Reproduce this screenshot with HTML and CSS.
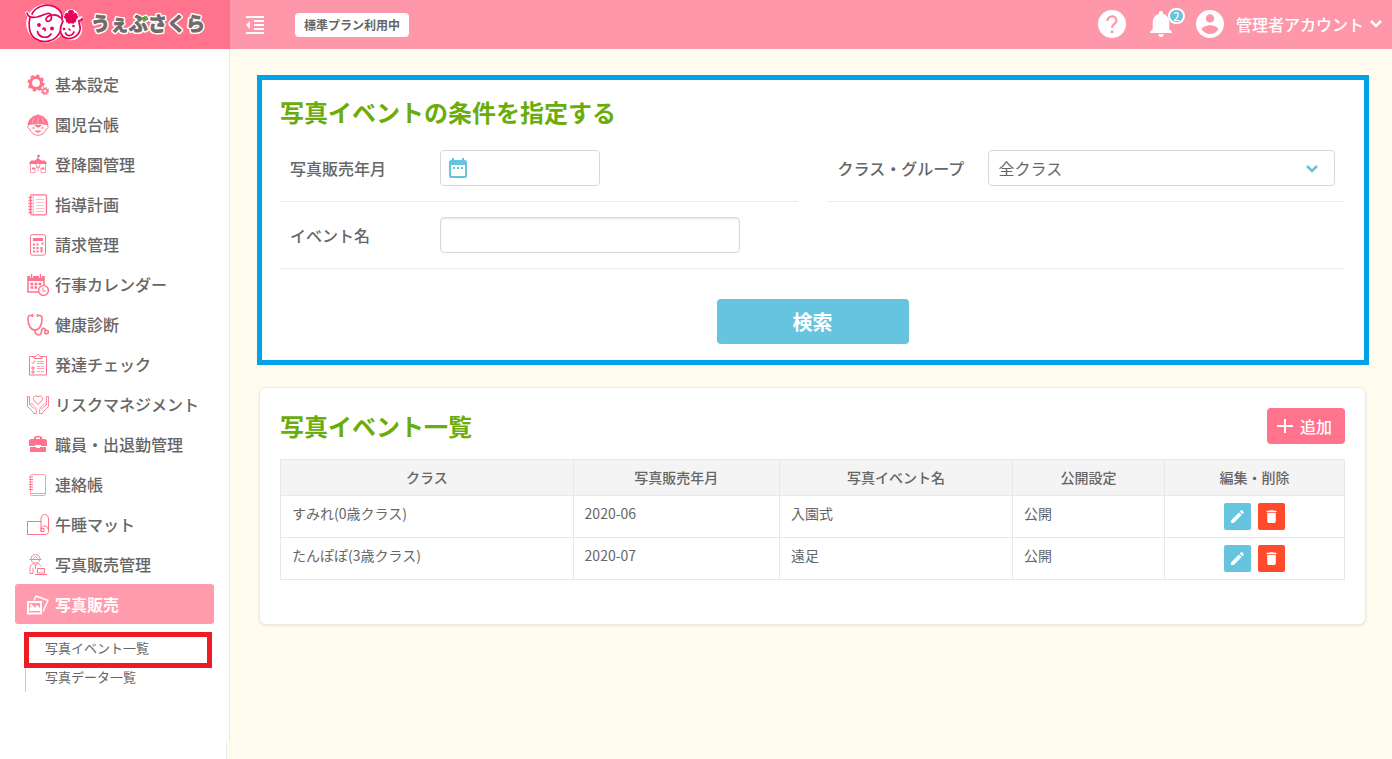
FILE: index.html
```html
<!DOCTYPE html>
<html lang="ja">
<head>
<meta charset="utf-8">
<meta name="viewport" content="width=device-width, initial-scale=1">
<title>写真イベント一覧 | うぇぶさくら</title>
<link rel="stylesheet" href="styles.css">
</head>
<body>
<header class="header">
  <a class="logo" href="#" aria-label="うぇぶさくら">
    <svg width="182" height="44" viewBox="0 0 182 44">
      <g fill="#fff" stroke="#fff" stroke-width="3.500" stroke-linejoin="round" stroke-linecap="round">
        <circle cx="20.500" cy="20.500" r="17.500"/>
        <circle cx="46" cy="26" r="9.500"/>
        <path d="M2 10c2 4 6 5 10 4M54 17l2-2"/>
        <circle cx="46" cy="14" r="6"/>
      </g>
      <g fill="none" stroke="#e5005a" stroke-width="1.700" stroke-linecap="round">
        <path d="M5 14C3 22 4 31 10 35.500c9 6 21 3 25.500-7.500M7 11C11 3 22 0 30 4c6 3 8 7 7 13"/>
        <path d="M2 10c1 4 5 5 10 4 8-2 12-6 14-2 2 6-4 8-5 5-1-4 9-8 15-2"/>
        <path d="M38 18c-3 6-4 12 0 15.500 6 4.500 15 1 17-6.500 1-5-2-7-1-9.500 2 0 3-1 3-2"/>
        <path d="M12.500 28.500c1 6 10 8 13.500 2.500M40.500 30c1.500 4 7 3 8.500-1M18 26c1-2 3 0 2 1.500M44 26l1 1"/>
      </g>
      <g fill="#e5005a">
        <circle cx="14" cy="22" r="1.900"/><circle cx="27" cy="25.500" r="1.900"/>
        <circle cx="39" cy="26" r="1.300"/><circle cx="48.500" cy="23" r="1.300"/>
        <path d="M46 14l-2.500-5 1.500-1.500 1 .8 1-.8 1.500 1.500zM46 14l4-3.800 1.800 1.200-.2 1.400 1 1-1.200 1.700zM46 14l4.800 2.800-.6 2-1.300.1-.6 1.200-2 -.4zM46 14l-.3 5.700-2 .4-.6-1.200-1.300-.1-.6-2zM46 14l-5.400 1.500-1.200-1.700 1-1-.2-1.400 1.800-1.200z" stroke="#e5005a" stroke-width="1.200" stroke-linejoin="round"/>
      </g>
      <g class="logo-text">
        <text class="logo-text-halo" x="66" y="28">うぇぶさくら</text>
        <text class="logo-text-face" x="66" y="28">うぇぶさくら</text>
      </g>
      <path d="M117 15l2 3M120 14l1 2" stroke="#6cb92d" stroke-width="2" stroke-linecap="round"/>
    </svg>
  </a>
  <button class="icon-button toggle" type="button" aria-label="メニューを閉じる">
    <svg width="18" height="18" viewBox="0 0 18 18" fill="#fff"><path d="M0 0h18v2H0zM8 4h10v2H8zM8 8h10v2H8zM8 12h10v2H8zM0 16h18v2H0zM4 5v8L0 9z"/></svg>
  </button>
  <span class="plan">標準プラン利用中</span>
  <div class="header-tools">
    <button class="icon-button" type="button" aria-label="ヘルプ">
      <svg width="28" height="28" viewBox="0 0 28 28"><circle cx="14" cy="14" r="14" fill="#fff"/><path d="M9.500 11c0-6 9-6 9-.5 0 3.500-4.500 3.500-4.500 7.500" fill="none" stroke="#ff97aa" stroke-width="2.200"/><path d="M12.700 20.500h2.600v2.600h-2.600z" fill="#ff97aa"/></svg>
    </button>
    <button class="icon-button bell" type="button" aria-label="お知らせ">
      <svg width="22" height="26" viewBox="4 2.500 16 19.500" preserveAspectRatio="none" fill="#fff"><path d="M12 22c1.100 0 2-.9 2-2h-4c0 1.100.89 2 2 2zm6-6v-5c0-3.070-1.640-5.640-4.500-6.320V4c0-.83-.67-1.500-1.500-1.500s-1.500.67-1.500 1.500v.68C7.630 5.360 6 7.920 6 11v5l-2 2v1h16v-1l-2-2z"/></svg>
      <span class="bell-count">2</span>
    </button>
    <button class="account" type="button">
      <svg width="28" height="28" viewBox="2 2 20 20" fill="#fff"><path d="M12 2C6.480 2 2 6.480 2 12s4.480 10 10 10 10-4.480 10-10S17.520 2 12 2zm0 3c1.660 0 3 1.340 3 3s-1.340 3-3 3-3-1.340-3-3 1.340-3 3-3zm0 14.200c-2.500 0-4.710-1.280-6-3.220.03-1.990 4-3.080 6-3.080 1.990 0 5.970 1.090 6 3.080-1.290 1.940-3.500 3.220-6 3.220z"/></svg>
      <span class="account-name">管理者アカウント</span>
      <svg width="12" height="8" viewBox="0 0 12 8" fill="none" stroke="#fff" stroke-width="2.600"><path d="M1 1l5 5 5-5"/></svg>
    </button>
  </div>
</header>

<div class="layout">
  <aside class="sidebar">
    <nav class="nav">
      <a class="nav-item" href="#">
        <svg class="nav-icon" viewBox="0 0 22 22" fill="none" stroke="#ff738c"><circle cx="9" cy="9" r="5.500" stroke-width="3.200"/><circle cx="9" cy="9" r="7.500" stroke-width="2" stroke-dasharray="3.300 2.590"/><circle cx="18" cy="17" r="2.300" stroke-width="1.600"/><circle cx="18" cy="17" r="3.500" stroke-width="1.300" stroke-dasharray="1.500 1.250"/></svg>
        基本設定</a>
      <a class="nav-item" href="#">
        <svg class="nav-icon" viewBox="0 0 22 22" fill="none" stroke="#ff738c"><path d="M1 10.500C2 5 6 1.500 11 1.500s9 3.500 10 9c-6-1-14-1-20 0z" fill="#ff738c"/><path d="M11 2.500V9M7 4L5 9M15 4l2 5" stroke="#ffc3cd" stroke-width=".8"/><path d="M11 0v2M2 11c-2 1-1 4 1 4 1 4 4 6.200 8 6.200s7-2.200 8-6.200c2 0 3-3 1-4"/><path d="M8.500 17c1.500 1.500 3.500 1.500 5 0z" fill="#ff738c"/><path d="M7 11h8l-3 2.500h-2z" fill="#ff738c" stroke="none"/><path d="M5.500 14h2M14.500 14h2" stroke-width="1.500"/></svg>
        園児台帳</a>
      <a class="nav-item" href="#">
        <svg class="nav-icon" viewBox="0 0 22 22" fill="none" stroke="#ff738c"><path d="M11 6V1" /><path d="M11 1l2 1-2 1zM2.500 9.500L4 7h4l3-2.500L14 7h4l1.500 2.500z" fill="#ff738c"/><path d="M3.500 10v8.500H8v-3c.5-3 5.500-3 6 0v3h4.500V10M11 14v3" opacity=".7"/><circle cx="11" cy="11" r="2" fill="#fff" opacity=".8"/><path d="M5 13.500h3v2H5zM14.500 13.500h3v2h-3z" fill="#ff738c" stroke="none"/></svg>
        登降園管理</a>
      <a class="nav-item" href="#">
        <svg class="nav-icon" viewBox="0 0 22 22" fill="none" stroke="#ff738c"><rect x="3.500" y=".8" width="16" height="20" rx="1.500" stroke-width="1.300"/><path d="M6.500 1v20" opacity=".4"/><path d="M1.500 3.500h4M1.500 6.500h4M1.500 9.500h4M1.500 12.500h4M1.500 15.500h4M1.500 18.500h4" stroke-width="1.300"/><path d="M9 5.500h8M9 8.500h8M9 11.500h8M9 14.500h8M9 17.500h8" opacity=".45"/></svg>
        指導計画</a>
      <a class="nav-item" href="#">
        <svg class="nav-icon" viewBox="0 0 22 22" fill="none" stroke="#ff738c"><rect x="3.500" y=".7" width="15" height="20.500" rx="2"/><path d="M6 4h10v3H6z" fill="#ff738c" stroke="none"/><path d="M6 10.500h6M6 14h6M6 17.500h6" stroke-width="2" stroke-dasharray="2 1.500"/><path d="M14.500 9.500h2M14.500 13v5.500" stroke-width="2"/></svg>
        請求管理</a>
      <a class="nav-item" href="#">
        <svg class="nav-icon" viewBox="0 0 22 22" fill="none" stroke="#ff738c"><path d="M17 11V3H1v15h10" stroke-width="1.500"/><path d="M1 2h16v5H1z" fill="#ff738c" stroke="none"/><path d="M4.500 0v4M13.500 0v4" stroke="#fff" stroke-width="3"/><path d="M4.500 0v4M13.500 0v4" stroke-width="1.400"/><path d="M3.500 10h11M3.500 13.500h8" stroke-width="2.400" stroke-dasharray="2.700 1.300"/><circle cx="16.500" cy="16.500" r="4.900" fill="#fff" stroke-width="1.400"/><path d="M16 13.500v3.500h3"/></svg>
        行事カレンダー</a>
      <a class="nav-item" href="#">
        <svg class="nav-icon" viewBox="0 0 22 22" fill="none" stroke="#ff738c" stroke-width="1.600"><path d="M5 1.500H3c-2 0-2 2-2 4 0 6 3 10.500 7 10.500s7-4.500 7-10.500c0-2 0-4-2-4h-2M8 16.500c0 6 6.500 5.500 6.500 1 0-4 4-4 4-1"/><path d="M5.500 0v3M10.500 0v3"/><circle cx="19.500" cy="18" r="1.800"/></svg>
        健康診断</a>
      <a class="nav-item" href="#">
        <svg class="nav-icon" viewBox="0 0 22 22" fill="none" stroke="#ff738c"><path d="M7 2.500H2.500v18.500h17V2.500H15M7 4.500h8v-2h-2c-.5-2.500-3.500-2.500-4 0H7z"/><path d="M5 8.500l1 1 2-3M5 13h2v2H5zM5 17h2v2H5z"/><path d="M10 7.500h7M10 9.500h7M10 12.500h3M14 12.500h3M10 14.500h7M10 17.500h3M14 17.500h3" opacity=".65"/></svg>
        発達チェック</a>
      <a class="nav-item" href="#">
        <svg class="nav-icon" viewBox="0 0 22 22" fill="none" stroke="#ff738c"><path d="M11 10.500L7.500 7c-3-3.500 1.500-7 3.500-4 2-3 6.500.5 3.500 4z"/><path d="M.5 2.500v10l7 7M.5 2.500h2v8l5 4.500M3 10.500c1-2 3 0 4 1.500 2 2 2.500 3 2.500 7.500h-3M21.500 2.500v10l-7 7M21.500 2.500h-2v8l-5 4.500M19 10.500c-1-2-3 0-4 1.500-2 2-2.500 3-2.500 7.500h3" opacity=".85"/></svg>
        リスクマネジメント</a>
      <a class="nav-item" href="#">
        <svg class="nav-icon" viewBox="0 0 22 22" fill="#ff738c"><path d="M7 5V4c0-1 1-2 2-2h4c1 0 2 1 2 2v1h3c1 0 2 1 2 2v5h-6v-1H8v1H2V7c0-1 1-2 2-2zm2 0h4V3.500H9zM3 13h6v1h4v-1h6v4c0 .6-.4 1-1 1H4c-.6 0-1-.4-1-1z"/></svg>
        職員・出退勤管理</a>
      <a class="nav-item" href="#">
        <svg class="nav-icon" viewBox="0 0 22 22" fill="none" stroke="#ff738c"><path d="M5 .5h12c1 0 1.500.5 1.500 1.500v18c0 1-.5 1.500-1.500 1.500H5c-1 0-1.500-.5-1.500-1.500V2c0-1 .5-1.500 1.500-1.500zM4 19.500h14" opacity=".7"/><path d="M2 3h4M2 5.500h4M2 8h4M2 10.500h4M2 13h4M2 15.500h4"/></svg>
        連絡帳</a>
      <a class="nav-item" href="#">
        <svg class="nav-icon" viewBox="0 0 22 22" fill="none" stroke="#ff738c"><path d="M14 7.500H.5v13H18c2 0 3.500-1 3.500-3V5c0-6-7.500-6-7.500 0v9.500M14 17.500v-3c1-4 7-3 7 1M14 14.500h3v3h-3z"/></svg>
        午睡マット</a>
      <a class="nav-item" href="#">
        <svg class="nav-icon" viewBox="0 0 22 22" fill="none" stroke="#ff738c"><path d="M4 5C4-1 13-1 13 5M2.500 5.500h12M4.500 6c0 4 8 4 8 0M6.500 4.500l2-2 2 2M3 19.500V14c0-3 2-4 3.500-4.500l2 1.500 2-1.500c1.500 0 2.500 1 3.500 3M3 19.500h3V14M8.500 11v4" opacity=".9"/><path d="M10.500 14.500h7v4.500h-7zM8 20.500h12"/></svg>
        写真販売管理</a>
      <a class="nav-item nav-item-active" href="#" aria-current="true">
        <svg class="nav-icon" viewBox="0 0 22 22" fill="none" stroke="#fff"><path d="M7 6.500L9 2l12 4.500-5 11" stroke-width="1.400"/><path d="M1 8h13v11.500H1z" stroke-width="2"/><path d="M2.500 17v-3l3-3 2.500 3 2-3 3 3v3z" fill="#fff" stroke="none"/><circle cx="4" cy="11" r="1" fill="#fff" stroke="none"/></svg>
        写真販売</a>
      <ul class="subnav">
        <li class="subnav-row subnav-row-marked"><a href="#">写真イベント一覧</a></li>
        <li class="subnav-row"><a href="#">写真データ一覧</a></li>
      </ul>
    </nav>
    <div class="sidebar-end"></div>
  </aside>

  <main class="main">
    <form class="card search" onsubmit="return false">
      <h2 class="title">写真イベントの条件を指定する</h2>
      <div class="fields">
        <div class="field">
          <label class="label" for="month">写真販売年月</label>
          <span class="month">
            <svg class="month-icon" width="18" height="20" viewBox="0 0 18 20" fill="#67c4df"><path d="M3 0h2v2h8V0h2v2h1c1 0 2 1 2 2v14c0 1-1 2-2 2H2c-1 0-2-1-2-2V4c0-1 1-2 2-2h1zM2 7v11h14V7zM4 9h2v2H4zM8 9h2v2H8zM12 9h2v2h-2z"/></svg>
            <input class="input month-input" id="month" type="text">
          </span>
        </div>
        <div class="field">
          <label class="label" for="class">クラス・グループ</label>
          <span class="select-wrap">
            <select class="input select" id="class"><option>全クラス</option></select>
            <svg class="select-arrow" width="12" height="8" viewBox="0 0 12 8" fill="none" stroke="#67c4df" stroke-width="2.600"><path d="M1 1l5 5 5-5"/></svg>
          </span>
        </div>
        <div class="field field-wide">
          <label class="label" for="event">イベント名</label>
          <input class="input event-input" id="event" type="text">
        </div>
      </div>
      <button class="submit" type="submit">検索</button>
    </form>

    <section class="card list">
      <div class="list-head">
        <h2 class="title">写真イベント一覧</h2>
        <button class="add" type="button">
          <svg width="16" height="16" viewBox="0 0 16 16" fill="#fff"><path d="M7 1h2v6h7v2H9v6H7V9H0V7h7z"/></svg>
          追加</button>
      </div>
      <table class="table">
        <colgroup><col class="col-class"><col class="col-month"><col class="col-name"><col class="col-public"><col class="col-action"></colgroup>
        <thead>
          <tr><th>クラス</th><th>写真販売年月</th><th>写真イベント名</th><th>公開設定</th><th>編集・削除</th></tr>
        </thead>
        <tbody>
          <tr>
            <td>すみれ(0歳クラス)</td><td>2020-06</td><td>入園式</td><td>公開</td>
            <td><div class="actions">
              <button class="action action-edit" type="button" aria-label="編集"><svg width="17" height="17" viewBox="0 0 24 24" fill="#fff"><path d="M3 17.250V21h3.750L17.810 9.940l-3.750-3.750L3 17.250zM20.710 7.040c.39-.39.39-1.020 0-1.410l-2.340-2.340c-.39-.39-1.020-.39-1.410 0l-1.830 1.830 3.750 3.750 1.830-1.830z"/></svg></button>
              <button class="action action-delete" type="button" aria-label="削除"><svg width="17" height="17" viewBox="0 0 24 24" fill="#fff"><path d="M6 19c0 1.100.9 2 2 2h8c1.100 0 2-.9 2-2V7H6v12zM19 4h-3.500l-1-1h-5l-1 1H5v2h14V4z"/></svg></button>
            </div></td>
          </tr>
          <tr>
            <td>たんぽぽ(3歳クラス)</td><td>2020-07</td><td>遠足</td><td>公開</td>
            <td><div class="actions">
              <button class="action action-edit" type="button" aria-label="編集"><svg width="17" height="17" viewBox="0 0 24 24" fill="#fff"><path d="M3 17.250V21h3.750L17.810 9.940l-3.750-3.750L3 17.250zM20.710 7.040c.39-.39.39-1.020 0-1.410l-2.340-2.340c-.39-.39-1.020-.39-1.410 0l-1.830 1.830 3.750 3.750 1.830-1.830z"/></svg></button>
              <button class="action action-delete" type="button" aria-label="削除"><svg width="17" height="17" viewBox="0 0 24 24" fill="#fff"><path d="M6 19c0 1.100.9 2 2 2h8c1.100 0 2-.9 2-2V7H6v12zM19 4h-3.500l-1-1h-5l-1 1H5v2h14V4z"/></svg></button>
            </div></td>
          </tr>
        </tbody>
      </table>
    </section>
  </main>
</div>
</body>
</html>
```

FILE: styles.css
```css
*,
*::before,
*::after {
  box-sizing: border-box;
}

body {
  display: flex;
  flex-direction: column;
  min-height: 100vh;
  margin: 0;
  background: #fffbef;
  color: #666;
  font-family: "Noto Sans CJK JP", sans-serif;
  font-size: 16px;
  font-weight: 500;
}

a {
  color: inherit;
  text-decoration: none;
}

button {
  padding: 0;
  border: 0;
  background: none;
  color: inherit;
  font: inherit;
  cursor: pointer;
}

svg {
  display: block;
  flex: none;
}

/* Header */
.header {
  display: flex;
  align-items: center;
  height: 49px;
  background: #ff97aa;
}

.logo {
  display: flex;
  align-items: center;
  width: 230px;
  height: 49px;
  padding-left: 25px;
  background: #ff738c;
}

.logo-text {
  font-size: 19px;
  font-weight: 700;
  stroke-linejoin: round;
}

.logo-text-halo {
  fill: #fff;
  stroke: #fff;
  stroke-width: 4px;
}

.logo-text-face {
  fill: #716a68;
  stroke: #716a68;
  stroke-width: 1px;
}

.toggle {
  margin: 0 31px 0 16px;
}

.plan {
  padding: 0 9px;
  border-radius: 4px;
  background: #fff;
  font-size: 12px;
  font-weight: 700;
  line-height: 24px;
}

.header-tools {
  display: flex;
  align-items: center;
  gap: 24px;
  margin-left: auto;
  padding: 0 10px 2px 0;
}

.bell {
  position: relative;
}

.bell-count {
  position: absolute;
  top: -3px;
  left: 18px;
  width: 17px;
  height: 16px;
  border: 2px solid #fff;
  border-radius: 8px;
  background: #67c4df;
  color: #fff;
  font-size: 11px;
  line-height: 12px;
  text-align: center;
}

.account {
  display: flex;
  align-items: center;
  color: #fff;
}

.account-name {
  margin: 0 6px 0 12px;
}

/* Sidebar */
.layout {
  display: flex;
  flex: 1;
}

.sidebar {
  display: flex;
  flex: none;
  flex-direction: column;
  width: 230px;
}

.nav {
  flex: 1;
  padding: 15px 15px 0;
  border-right: 1px solid #eaeaea;
  background: #fff;
}

.sidebar-end {
  height: 16px;
  margin-right: 3px;
  border-right: 1px solid #eaeaea;
  background: #fff;
}

.nav-item {
  display: flex;
  align-items: center;
  gap: 6px;
  height: 40px;
  padding-left: 12px;
  border-radius: 3px;
}

.nav-icon {
  width: 22px;
  height: 24px;
  padding-top: 2px;
}

.nav-item-active {
  background: #ff9bad;
  color: #fff;
  font-weight: 700;
}

.subnav {
  margin: 9px 2px 0 10px;
  padding: 0 0 1px;
  border-left: 1px solid #ccc;
  font-size: 13px;
  font-weight: 400;
  list-style: none;
}

.subnav-row {
  padding-left: 19px;
  line-height: 29px;
}

.subnav-row-marked {
  position: relative;
}

.subnav-row-marked::after {
  position: absolute;
  inset: -1px 0 -6px -2px;
  border: 5px solid #ed1c24;
  content: "";
  pointer-events: none;
}

/* Content */
.main {
  flex: 1;
  min-width: 0;
  padding: 26px 23px 26px 27px;
}

.card {
  background: #fff;
}

.title {
  margin: 0;
  color: #6aad0b;
  font-size: 24px;
  font-weight: 700;
  line-height: 36px;
}

.search {
  padding: 14px 19px 16px 18px;
  border: 5px solid #00a2e8;
}

.fields {
  display: grid;
  grid-template-columns: 1fr 1fr;
  column-gap: 30px;
  margin-top: 5px;
}

.field {
  display: flex;
  align-items: center;
  padding: 15px 10px;
  border-bottom: 1px solid #eaeaea;
}

.field-wide {
  grid-column: 1 / -1;
}

.label {
  flex: none;
  width: 150px;
}

.input {
  width: 100%;
  height: 36px;
  padding: 0 10px;
  border: 1px solid #d8d8d8;
  border-radius: 4px;
  background: #fff;
  color: #666;
  font: inherit;
  font-weight: 400;
}

.month {
  position: relative;
  width: 160px;
}

.month-icon {
  position: absolute;
  top: 8px;
  left: 9px;
}

.month-input {
  display: block;
  padding-left: 36px;
}

.select-wrap {
  position: relative;
  flex: 1;
}

.select {
  display: block;
  appearance: none;
}

.select-arrow {
  position: absolute;
  top: 15px;
  right: 17px;
  pointer-events: none;
}

.event-input {
  width: 300px;
  box-shadow: inset 0 1px 2px #e4e4e4;
}

.submit {
  display: block;
  width: 192px;
  height: 45px;
  margin: 30px auto 0;
  border-radius: 4px;
  background: #67c4df;
  color: #fff;
  font-size: 20px;
  font-weight: 700;
}

.list {
  margin: 22px 3px 0 2px;
  padding: 20px 20px 44px;
  border: 1px solid #eeebe2;
  border-radius: 7px;
  box-shadow: 0 1px 2px #e8e4da;
}

.list-head {
  display: flex;
  justify-content: space-between;
  margin-bottom: 15px;
}

.add {
  display: flex;
  align-items: center;
  gap: 7px;
  height: 36px;
  padding: 0 13px 0 10px;
  border-radius: 4px;
  background: #ff738c;
  color: #fff;
}

.table {
  width: 100%;
  border-collapse: collapse;
  table-layout: fixed;
  font-size: 14px;
}

.table th,
.table td {
  border: 1px solid #e8e8e8;
}

.table th {
  height: 36px;
  padding: 0 0 2px;
  background: #f4f4f4;
  font-weight: 500;
}

.table td {
  height: 42px;
  padding: 7px 11px;
  font-weight: 400;
  line-height: 21px;
  vertical-align: top;
}

.col-class {
  width: 27.5%;
}

.col-month {
  width: 19.4%;
}

.col-name {
  width: 21.9%;
}

.col-public {
  width: 14.3%;
}

.col-action {
  width: 16.9%;
}

.actions {
  display: flex;
  justify-content: center;
  gap: 7px;
}

.action {
  display: flex;
  align-items: center;
  justify-content: center;
  width: 27px;
  height: 27px;
  border-radius: 2px;
}

.action-edit {
  background: #67c4df;
}

.action-delete {
  background: #ff4a2c;
}
```
